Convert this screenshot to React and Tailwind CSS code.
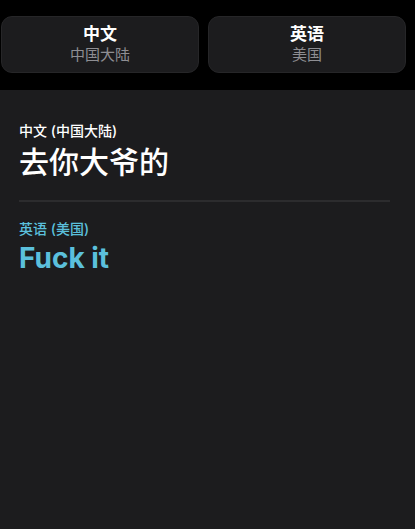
export default function App() {
  return (
    <div
      className="w-[415px] h-[529px] bg-black flex flex-col"
      style={{ fontFamily: 'Inter, "Noto Sans CJK SC", sans-serif' }}
    >
      {/* language picker */}
      <div className="grid grid-cols-2 gap-[9px] pl-[1px] pr-[9px] pt-[16px] pb-[17px]">
        <div className="h-[57px] rounded-[11px] bg-[#1c1c1e] border border-[#262628] flex flex-col items-center justify-center">
          <div className="text-[17px] leading-[20px] font-bold text-white">中文</div>
          <div className="text-[15px] leading-[20px] text-[#8e8e93] mt-[1px]">中国大陆</div>
        </div>
        <div className="h-[57px] rounded-[11px] bg-[#1c1c1e] border border-[#262628] flex flex-col items-center justify-center">
          <div className="text-[17px] leading-[20px] font-bold text-white">英语</div>
          <div className="text-[15px] leading-[20px] text-[#8e8e93] mt-[1px]">美国</div>
        </div>
      </div>

      {/* translation */}
      <div className="flex-1 bg-[#1c1c1e] px-[19px] pt-[32px]">
        <div className="text-[14px] leading-[18px] font-medium text-white">中文 (中国大陆)</div>
        <div className="mt-[4px] text-[30px] leading-[36px] font-medium text-white">去你大爷的</div>
        <div className="mt-[20px] mr-[6px] h-[2px] bg-[#2c2c2e]"></div>
        <div className="mt-[18px] text-[14px] leading-[18px] font-medium text-[#5bc0dc]">英语 (美国)</div>
        <div className="mt-[3px] text-[28px] leading-[34px] font-bold text-[#5bc0dc]">Fuck it</div>
      </div>
    </div>
  );
}
